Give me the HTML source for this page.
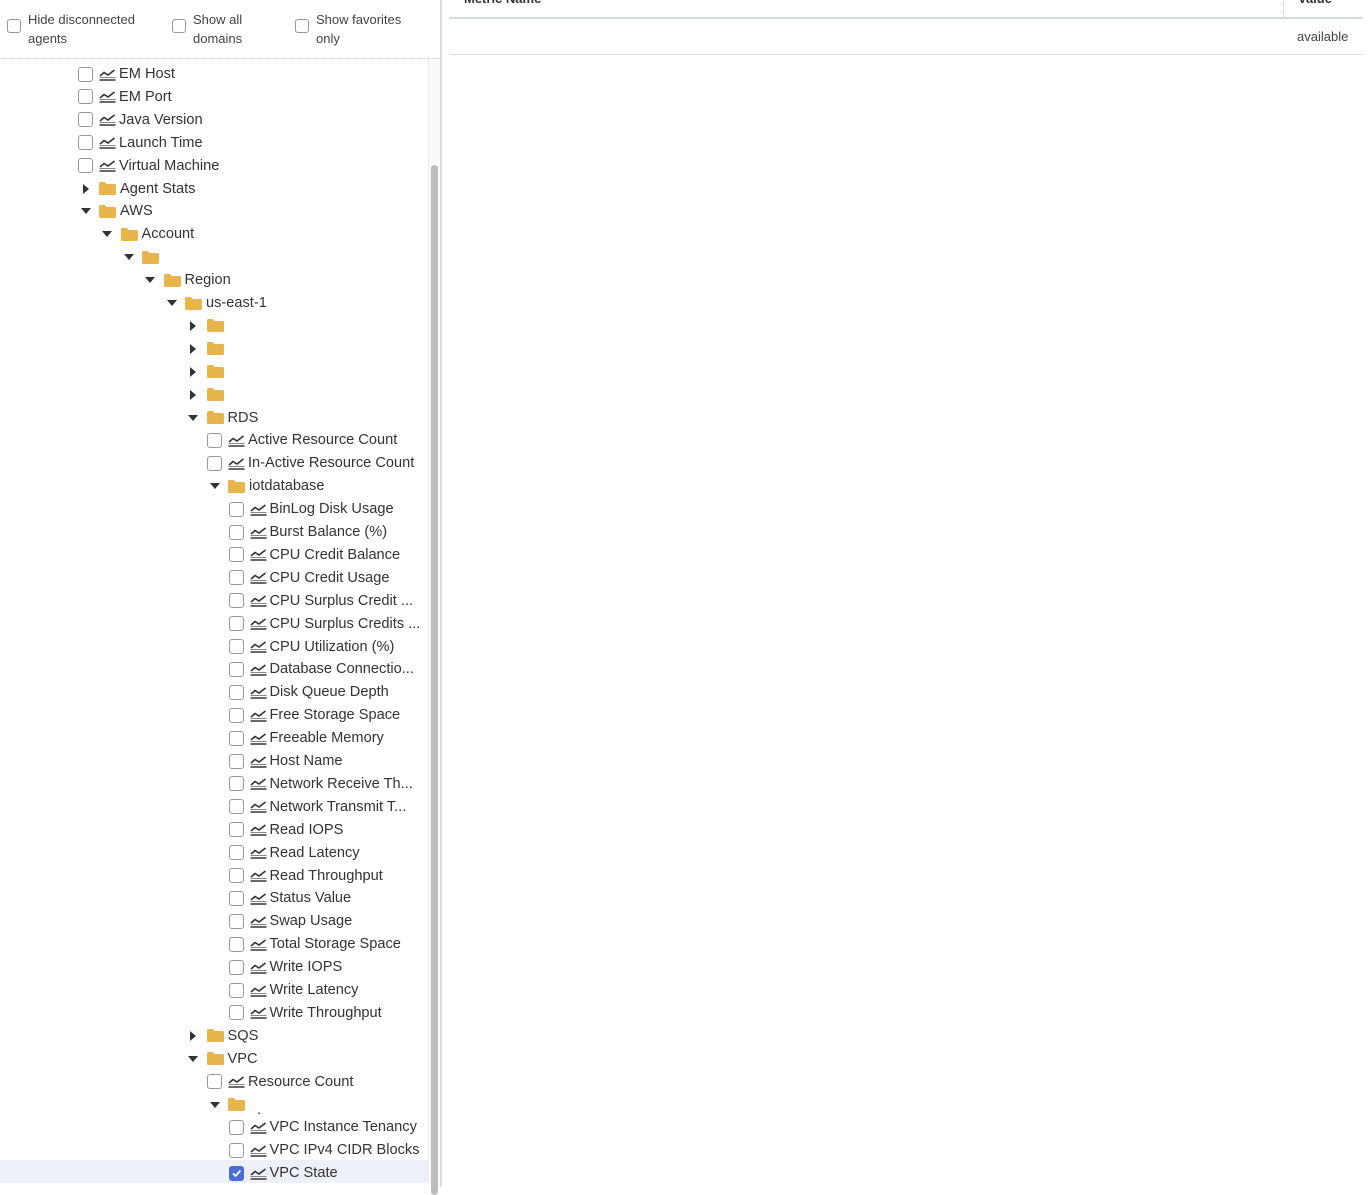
<!DOCTYPE html>
<html><head><meta charset="utf-8">
<style>
*{box-sizing:border-box;margin:0;padding:0}
body{width:1369px;height:1187px;overflow:hidden;background:#fff;font-family:"Liberation Sans",sans-serif;color:#333;position:relative}
.hdr{position:absolute;top:0;left:0;width:441px;height:59px;border-bottom:1px dotted #ccc}
.hc{position:absolute;top:10px;font-size:13px;line-height:19px;color:#444}
.hc .b{position:absolute;left:-21px;top:9px;width:14px;height:14px;border:1px solid #999;border-radius:3px;background:#fff}
.r{position:absolute;height:22px;display:flex;align-items:center;font-size:14.6px;white-space:nowrap;color:#333}
.cb{width:15px;height:15px;border:1px solid #999;border-radius:3px;background:#fff;margin-right:6px;flex:none}
.cb.on{background:#4a6cd4;border-color:#4a6cd4;position:relative}
.ar{width:15px;height:15px;margin-right:6px;flex:none;display:flex;align-items:center;justify-content:center}
.dn{width:0;height:0;border-left:5px solid transparent;border-right:5px solid transparent;border-top:6px solid #333}
.rt{width:0;height:0;border-top:5px solid transparent;border-bottom:5px solid transparent;border-left:6px solid #333}
.fd{width:17px;height:13px;margin-right:4px;flex:none}
.ic{width:17px;height:13px;margin-right:3px;flex:none}
.hl{position:absolute;left:0;top:1160px;width:428px;height:23px;background:#eef0f8}
.track{position:absolute;left:428px;top:59px;width:12px;height:1128px;background:#fafafa;border-left:1px solid #eee}
.thumb{position:absolute;left:431px;top:165px;width:7px;height:1030px;background:#bdbdbd;border-radius:4px}
.vb{position:absolute;left:440px;top:0;width:2px;height:1187px;background:#ddd}
#t{position:absolute;left:0;top:1px;width:0;height:0}
</style></head><body>
<svg width="0" height="0" style="position:absolute"><defs>
<symbol id="f" viewBox="0 0 17 13"><path d="M0 1.5Q0 0 1.5 0H6L7.5 2H15.5Q17 2 17 3.5V11.5Q17 13 15.5 13H1.5Q0 13 0 11.5Z" fill="#e8b54c"/></symbol>
<symbol id="c" viewBox="0 0 17 13"><path d="M0.5 12H16.5" stroke="#444" stroke-width="1.6"/><path d="M0.5 9.5H16.5" stroke="#888" stroke-width="1"/><path d="M1 8L5 4.5L9 7L15.5 2" fill="none" stroke="#333" stroke-width="1.6"/></symbol>
</defs></svg>

<div class="hdr">
<div class="hc" style="left:28px"><span class="b"></span>Hide disconnected<br>agents</div>
<div class="hc" style="left:193px"><span class="b"></span>Show all<br>domains</div>
<div class="hc" style="left:316px"><span class="b"></span>Show favorites<br>only</div>
</div>
<div class="hl"></div>
<div class="track"></div><div class="thumb"></div><div class="vb"></div>

<div id="t">
<div class="r" style="top:62px;left:78px"><span class="cb"></span><svg class="ic"><use href="#c"/></svg>EM Host</div>
<div class="r" style="top:84.9px;left:78px"><span class="cb"></span><svg class="ic"><use href="#c"/></svg>EM Port</div>
<div class="r" style="top:107.8px;left:78px"><span class="cb"></span><svg class="ic"><use href="#c"/></svg>Java Version</div>
<div class="r" style="top:130.7px;left:78px"><span class="cb"></span><svg class="ic"><use href="#c"/></svg>Launch Time</div>
<div class="r" style="top:153.6px;left:78px"><span class="cb"></span><svg class="ic"><use href="#c"/></svg>Virtual Machine</div>
<div class="r" style="top:176.5px;left:78px"><span class="ar"><i class="rt"></i></span><svg class="fd"><use href="#f"/></svg>Agent Stats</div>
<div class="r" style="top:199.4px;left:78px"><span class="ar"><i class="dn"></i></span><svg class="fd"><use href="#f"/></svg>AWS</div>
<div class="r" style="top:222.3px;left:99.5px"><span class="ar"><i class="dn"></i></span><svg class="fd"><use href="#f"/></svg>Account</div>
<div class="r" style="top:245.2px;left:121px"><span class="ar"><i class="dn"></i></span><svg class="fd"><use href="#f"/></svg></div>
<div class="r" style="top:268.1px;left:142.5px"><span class="ar"><i class="dn"></i></span><svg class="fd"><use href="#f"/></svg>Region</div>
<div class="r" style="top:291px;left:164px"><span class="ar"><i class="dn"></i></span><svg class="fd"><use href="#f"/></svg>us-east-1</div>
<div class="r" style="top:313.9px;left:185.5px"><span class="ar"><i class="rt"></i></span><svg class="fd"><use href="#f"/></svg></div>
<div class="r" style="top:336.8px;left:185.5px"><span class="ar"><i class="rt"></i></span><svg class="fd"><use href="#f"/></svg></div>
<div class="r" style="top:359.7px;left:185.5px"><span class="ar"><i class="rt"></i></span><svg class="fd"><use href="#f"/></svg></div>
<div class="r" style="top:382.6px;left:185.5px"><span class="ar"><i class="rt"></i></span><svg class="fd"><use href="#f"/></svg></div>
<div class="r" style="top:405.5px;left:185.5px"><span class="ar"><i class="dn"></i></span><svg class="fd"><use href="#f"/></svg>RDS</div>
<div class="r" style="top:428.4px;left:207px"><span class="cb"></span><svg class="ic"><use href="#c"/></svg>Active Resource Count</div>
<div class="r" style="top:451.3px;left:207px"><span class="cb"></span><svg class="ic"><use href="#c"/></svg>In-Active Resource Count</div>
<div class="r" style="top:474.2px;left:207px"><span class="ar"><i class="dn"></i></span><svg class="fd"><use href="#f"/></svg>iotdatabase</div>
<div class="r" style="top:497.1px;left:228.5px"><span class="cb"></span><svg class="ic"><use href="#c"/></svg>BinLog Disk Usage</div>
<div class="r" style="top:520px;left:228.5px"><span class="cb"></span><svg class="ic"><use href="#c"/></svg>Burst Balance (%)</div>
<div class="r" style="top:542.9px;left:228.5px"><span class="cb"></span><svg class="ic"><use href="#c"/></svg>CPU Credit Balance</div>
<div class="r" style="top:565.8px;left:228.5px"><span class="cb"></span><svg class="ic"><use href="#c"/></svg>CPU Credit Usage</div>
<div class="r" style="top:588.7px;left:228.5px"><span class="cb"></span><svg class="ic"><use href="#c"/></svg>CPU Surplus Credit ...</div>
<div class="r" style="top:611.6px;left:228.5px"><span class="cb"></span><svg class="ic"><use href="#c"/></svg>CPU Surplus Credits ...</div>
<div class="r" style="top:634.5px;left:228.5px"><span class="cb"></span><svg class="ic"><use href="#c"/></svg>CPU Utilization (%)</div>
<div class="r" style="top:657.4px;left:228.5px"><span class="cb"></span><svg class="ic"><use href="#c"/></svg>Database Connectio...</div>
<div class="r" style="top:680.3px;left:228.5px"><span class="cb"></span><svg class="ic"><use href="#c"/></svg>Disk Queue Depth</div>
<div class="r" style="top:703.2px;left:228.5px"><span class="cb"></span><svg class="ic"><use href="#c"/></svg>Free Storage Space</div>
<div class="r" style="top:726.1px;left:228.5px"><span class="cb"></span><svg class="ic"><use href="#c"/></svg>Freeable Memory</div>
<div class="r" style="top:749px;left:228.5px"><span class="cb"></span><svg class="ic"><use href="#c"/></svg>Host Name</div>
<div class="r" style="top:771.9px;left:228.5px"><span class="cb"></span><svg class="ic"><use href="#c"/></svg>Network Receive Th...</div>
<div class="r" style="top:794.8px;left:228.5px"><span class="cb"></span><svg class="ic"><use href="#c"/></svg>Network Transmit T...</div>
<div class="r" style="top:817.7px;left:228.5px"><span class="cb"></span><svg class="ic"><use href="#c"/></svg>Read IOPS</div>
<div class="r" style="top:840.6px;left:228.5px"><span class="cb"></span><svg class="ic"><use href="#c"/></svg>Read Latency</div>
<div class="r" style="top:863.5px;left:228.5px"><span class="cb"></span><svg class="ic"><use href="#c"/></svg>Read Throughput</div>
<div class="r" style="top:886.4px;left:228.5px"><span class="cb"></span><svg class="ic"><use href="#c"/></svg>Status Value</div>
<div class="r" style="top:909.3px;left:228.5px"><span class="cb"></span><svg class="ic"><use href="#c"/></svg>Swap Usage</div>
<div class="r" style="top:932.2px;left:228.5px"><span class="cb"></span><svg class="ic"><use href="#c"/></svg>Total Storage Space</div>
<div class="r" style="top:955.1px;left:228.5px"><span class="cb"></span><svg class="ic"><use href="#c"/></svg>Write IOPS</div>
<div class="r" style="top:978px;left:228.5px"><span class="cb"></span><svg class="ic"><use href="#c"/></svg>Write Latency</div>
<div class="r" style="top:1000.9px;left:228.5px"><span class="cb"></span><svg class="ic"><use href="#c"/></svg>Write Throughput</div>
<div class="r" style="top:1023.8px;left:185.5px"><span class="ar"><i class="rt"></i></span><svg class="fd"><use href="#f"/></svg>SQS</div>
<div class="r" style="top:1046.7px;left:185.5px"><span class="ar"><i class="dn"></i></span><svg class="fd"><use href="#f"/></svg>VPC</div>
<div class="r" style="top:1069.6px;left:207px"><span class="cb"></span><svg class="ic"><use href="#c"/></svg>Resource Count</div>
<div class="r" style="top:1092.5px;left:207px"><span class="ar"><i class="dn"></i></span><svg class="fd"><use href="#f"/></svg><span style="position:relative;top:5px;left:8px">.</span></div>
<div class="r" style="top:1115.4px;left:228.5px"><span class="cb"></span><svg class="ic"><use href="#c"/></svg>VPC Instance Tenancy</div>
<div class="r" style="top:1138.3px;left:228.5px"><span class="cb"></span><svg class="ic"><use href="#c"/></svg>VPC IPv4 CIDR Blocks</div>
<div class="r" style="top:1161.2px;left:228.5px"><span class="cb on"><svg width="13" height="13" style="position:absolute;left:0;top:0"><path d="M3 6.5L5.5 9L10.5 3.5" fill="none" stroke="#fff" stroke-width="1.8"/></svg></span><svg class="ic"><use href="#c"/></svg>VPC State</div>
</div>

<div style="position:absolute;left:464px;top:-9px;font-size:13px;font-weight:bold;color:#333">Metric Name</div>
<div style="position:absolute;left:1298px;top:-9px;font-size:13px;font-weight:bold;color:#333">Value</div>
<div style="position:absolute;left:1283px;top:0;height:17px;border-left:1px dotted #ccc"></div>
<div style="position:absolute;left:449px;top:17px;width:914px;height:2px;background:#d5d8dc"></div>
<div style="position:absolute;left:1297px;top:29px;font-size:13px;color:#444">available</div>
<div style="position:absolute;left:449px;top:54px;width:914px;height:1px;background:#dde0e3"></div>
</body></html>
